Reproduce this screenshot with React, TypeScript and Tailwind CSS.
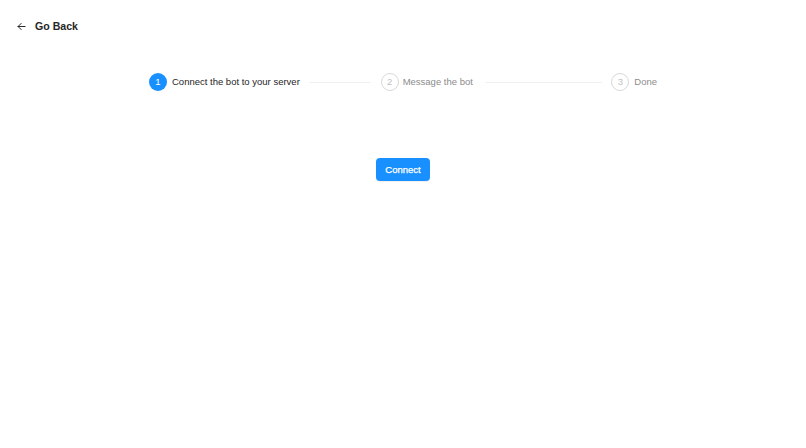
import React from "react";

function Circle({ n, active }: { n: number; active?: boolean }) {
  return active ? (
    <div className="flex h-[18px] w-[18px] flex-none items-center justify-center rounded-full bg-[#1890ff] text-[9.5px] leading-none text-white">
      {n}
    </div>
  ) : (
    <div className="flex h-[18px] w-[18px] flex-none items-center justify-center rounded-full border border-[#d9d9d9] text-[9.5px] leading-none text-[#bfbfbf]">
      {n}
    </div>
  );
}

export default function App() {
  return (
    <div className="h-[448px] w-[806px] bg-white font-['Liberation_Sans',Arial,sans-serif]">
      <div className="flex h-[14px] items-center gap-[9px] pl-[17px] pt-[19px] box-content">
        <svg width="9" height="9" viewBox="0 0 10 10" fill="none" stroke="#262626" strokeWidth="1.1" strokeLinecap="round" strokeLinejoin="round">
          <path d="M9 5H1.2" />
          <path d="M4.6 1.6L1.2 5l3.4 3.4" />
        </svg>
        <span className="text-[10.6px] font-bold leading-none text-[#262626]">Go Back</span>
      </div>

      <div className="mx-auto mt-[40px] flex h-[18px] w-[508px] items-center">
        <div className="flex flex-1 items-center">
          <Circle n={1} active />
          <span className="ml-[5px] whitespace-nowrap text-[9.5px] leading-none text-[#262626]">
            Connect the bot to your server
          </span>
          <div className="ml-[9px] h-px flex-1 bg-[#f0f0f0]" />
        </div>
        <div className="flex flex-1 items-center pl-[10px]">
          <Circle n={2} />
          <span className="ml-[4px] whitespace-nowrap text-[9.5px] leading-none text-[#8c8c8c]">
            Message the bot
          </span>
          <div className="ml-[12px] h-px flex-1 bg-[#f0f0f0]" />
        </div>
        <div className="flex flex-none items-center pl-[9px]">
          <Circle n={3} />
          <span className="ml-[5px] whitespace-nowrap text-[9.5px] leading-none text-[#8c8c8c]">
            Done
          </span>
        </div>
      </div>

      <div className="mt-[67px] flex justify-center">
        <button className="flex h-[23px] w-[54px] items-center justify-center rounded-[4px] bg-[#1890ff] text-[9.5px] font-medium leading-none text-white shadow-[0_1px_0_rgba(0,0,0,0.05)] [-webkit-text-stroke:0.25px_white]">
          Connect
        </button>
      </div>
    </div>
  );
}
